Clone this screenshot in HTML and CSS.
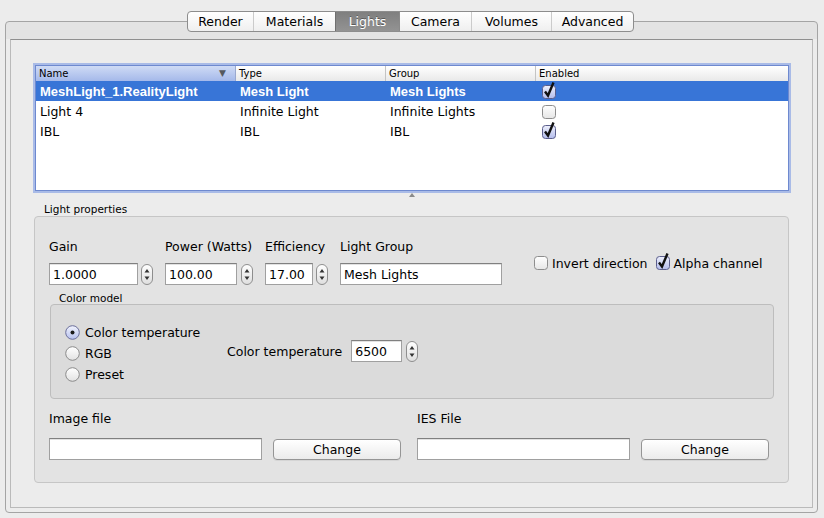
FILE: index.html
```html
<!DOCTYPE html>
<html>
<head>
<meta charset="utf-8">
<title>Lights</title>
<link rel="stylesheet" href="styles.css">
</head>
<body>
<div class="tabs">
  <div class="tab">Render</div>
  <div class="tab">Materials</div>
  <div class="tab sel">Lights</div>
  <div class="tab">Camera</div>
  <div class="tab">Volumes</div>
  <div class="tab">Advanced</div>
</div>
<div class="tabbox">
  <div class="content">
    <div class="table">
      <div class="thead">
        <div class="th sorted"><span>Name</span><span class="sort">▼</span></div>
        <div class="th">Type</div>
        <div class="th">Group</div>
        <div class="th last">Enabled</div>
      </div>
      <div class="row sel">
        <div>MeshLight_1.RealityLight</div>
        <div>Mesh Light</div>
        <div>Mesh Lights</div>
        <div class="cbcell"><svg class="cb" width="14" height="14" viewBox="0 0 14 14"><defs><linearGradient id="gc1" x1="0" y1="0" x2="0" y2="1"><stop offset="0" stop-color="#eef0fc"/><stop offset="1" stop-color="#b3bcec"/></linearGradient></defs><rect x="0.5" y="0.5" width="13" height="13" rx="3" fill="url(#gc1)" stroke="#5b5e8c"/><path d="M3 6.5 L6 10.5 L11.5 -2.5" fill="none" stroke="#111" stroke-width="2.4"/></svg></div>
      </div>
      <div class="row">
        <div>Light 4</div>
        <div>Infinite Light</div>
        <div>Infinite Lights</div>
        <div class="cbcell"><svg class="cb" width="14" height="14" viewBox="0 0 14 14"><defs><linearGradient id="gu1" x1="0" y1="0" x2="0" y2="1"><stop offset="0" stop-color="#ffffff"/><stop offset="1" stop-color="#e6e6e6"/></linearGradient></defs><rect x="0.5" y="0.5" width="13" height="13" rx="3" fill="url(#gu1)" stroke="#8d8d8d"/></svg></div>
      </div>
      <div class="row">
        <div>IBL</div>
        <div>IBL</div>
        <div>IBL</div>
        <div class="cbcell"><svg class="cb" width="14" height="14" viewBox="0 0 14 14"><rect x="0.5" y="0.5" width="13" height="13" rx="3" fill="url(#gc1)" stroke="#5b5e8c"/><path d="M3 6.5 L6 10.5 L11.5 -2.5" fill="none" stroke="#111" stroke-width="2.4"/></svg></div>
      </div>
    </div>
    <div class="splitter"><svg width="6" height="4" viewBox="0 0 6 4"><path d="M0 4 L3 0 L6 4 Z" fill="#8a8a8a"/></svg></div>
    <div class="gtitle">Light properties</div>
    <div class="group">
      <div class="r1">
        <div class="field">
          <div class="lbl">Gain</div>
          <div class="ctl">
            <div class="inp w-gain">1.0000</div>
            <svg class="spin" width="12" height="21" viewBox="0 0 12 21"><defs><linearGradient id="gs" x1="0" y1="0" x2="0" y2="1"><stop offset="0" stop-color="#ffffff"/><stop offset="1" stop-color="#dedede"/></linearGradient></defs><rect x="0.5" y="0.5" width="11" height="20" rx="5.5" fill="url(#gs)" stroke="#8e8e8e"/><path d="M6 5 L3.5 8.5 L8.5 8.5 Z M3.5 12.5 L8.5 12.5 L6 16 Z" fill="#333"/></svg>
          </div>
        </div>
        <div class="field">
          <div class="lbl">Power (Watts)</div>
          <div class="ctl gap4">
            <div class="inp w-power">100.00</div>
            <svg class="spin" width="12" height="21" viewBox="0 0 12 21"><rect x="0.5" y="0.5" width="11" height="20" rx="5.5" fill="url(#gs)" stroke="#8e8e8e"/><path d="M6 5 L3.5 8.5 L8.5 8.5 Z M3.5 12.5 L8.5 12.5 L6 16 Z" fill="#333"/></svg>
          </div>
        </div>
        <div class="field">
          <div class="lbl">Efficiency</div>
          <div class="ctl">
            <div class="inp w-eff">17.00</div>
            <svg class="spin" width="12" height="21" viewBox="0 0 12 21"><rect x="0.5" y="0.5" width="11" height="20" rx="5.5" fill="url(#gs)" stroke="#8e8e8e"/><path d="M6 5 L3.5 8.5 L8.5 8.5 Z M3.5 12.5 L8.5 12.5 L6 16 Z" fill="#333"/></svg>
          </div>
        </div>
        <div class="field">
          <div class="lbl">Light Group</div>
          <div class="ctl">
            <div class="inp w-group">Mesh Lights</div>
          </div>
        </div>
        <div class="checks">
          <div class="chk"><svg class="cb" width="14" height="14" viewBox="0 0 14 14"><rect x="0.5" y="0.5" width="13" height="13" rx="3" fill="url(#gu1)" stroke="#8d8d8d"/></svg><span>Invert direction</span></div>
          <div class="chk"><svg class="cb" width="14" height="14" viewBox="0 0 14 14"><rect x="0.5" y="0.5" width="13" height="13" rx="3" fill="url(#gc1)" stroke="#5b5e8c"/><path d="M3 6.5 L6 10.5 L11.5 -2.5" fill="none" stroke="#111" stroke-width="2.4"/></svg><span>Alpha channel</span></div>
        </div>
      </div>
      <div class="subtitle">Color model</div>
      <div class="inner">
        <div class="radios">
          <div class="radio"><svg width="15" height="15" viewBox="0 0 15 15"><defs><linearGradient id="gr1" x1="0" y1="0" x2="0" y2="1"><stop offset="0" stop-color="#f2f4fd"/><stop offset="1" stop-color="#b6c0ee"/></linearGradient><linearGradient id="gr0" x1="0" y1="0" x2="0" y2="1"><stop offset="0" stop-color="#ffffff"/><stop offset="1" stop-color="#e2e2e2"/></linearGradient></defs><circle cx="7.5" cy="7.5" r="6.8" fill="url(#gr1)" stroke="#6b6f9b"/><circle cx="7.5" cy="7.5" r="2" fill="#1a1a1a"/></svg><span>Color temperature</span></div>
          <div class="radio"><svg width="15" height="15" viewBox="0 0 15 15"><circle cx="7.5" cy="7.5" r="6.8" fill="url(#gr0)" stroke="#8b8b8b"/></svg><span>RGB</span></div>
          <div class="radio"><svg width="15" height="15" viewBox="0 0 15 15"><circle cx="7.5" cy="7.5" r="6.8" fill="url(#gr0)" stroke="#8b8b8b"/></svg><span>Preset</span></div>
        </div>
        <div class="temp">
          <span class="templbl">Color temperature</span>
          <div class="inp w-temp">6500</div>
          <svg class="spin" width="12" height="21" viewBox="0 0 12 21"><rect x="0.5" y="0.5" width="11" height="20" rx="5.5" fill="url(#gs)" stroke="#8e8e8e"/><path d="M6 5 L3.5 8.5 L8.5 8.5 Z M3.5 12.5 L8.5 12.5 L6 16 Z" fill="#333"/></svg>
        </div>
      </div>
      <div class="files">
        <div class="fcol">
          <div class="lbl">Image file</div>
          <div class="fctl">
            <div class="inp w-file"></div>
            <div class="btn">Change</div>
          </div>
        </div>
        <div class="fcol">
          <div class="lbl">IES File</div>
          <div class="fctl">
            <div class="inp w-file"></div>
            <div class="btn">Change</div>
          </div>
        </div>
      </div>
    </div>
  </div>
</div>
</body>
</html>
```
FILE: styles.css
```css
* { box-sizing: border-box; }
html, body { margin: 0; padding: 0; }
body {
  width: 824px;
  height: 518px;
  overflow: hidden;
  background: #ececec;
  font-family: "DejaVu Sans", sans-serif;
  font-size: 12.5px;
  color: #000;
  padding-top: 11px;
}

/* segmented tabs */
.tabs {
  display: flex;
  margin-left: 187px;
  width: 447px;
  height: 21px;
  border: 1px solid #8d8d8d;
  border-radius: 4px;
  background: linear-gradient(#ffffff, #efefef);
  position: relative;
  z-index: 1;
  overflow: hidden;
}
.tab {
  text-align: center;
  line-height: 19px;
  border-left: 1px solid #cbcbcb;
}
.tab:nth-child(1) { width: 65px; border-left: none; }
.tab:nth-child(2) { width: 82px; }
.tab:nth-child(3) { width: 64px; }
.tab:nth-child(4) { width: 72px; }
.tab:nth-child(5) { width: 80px; }
.tab:nth-child(6) { width: 82px; }
.tab.sel {
  background: linear-gradient(#7f7f7f, #939393);
  color: #fff;
  border-left-color: #6f6f6f;
  text-shadow: 0 -1px 0 rgba(0,0,0,0.35);
}
.tab.sel + .tab { border-left-color: #8a8a8a; }

/* tab box */
.tabbox {
  margin: -11px 0 0 5px;
  width: 813px;
  height: 492px;
  border: 1px solid #a4a4a4;
  border-radius: 4px;
  background: linear-gradient(#e3e3e3 0, #e3e3e3 17px, #ececec 17px);
  padding: 17px 4px 4px 4px;
}
.content {
  height: 469px;
  border: 1px solid #bababa;
  border-top-color: #8f8f8f;
  background: #ececec;
  padding-top: 25px;
}

/* table */
.table {
  margin-left: 24px;
  width: 754px;
  height: 126px;
  border: 1px solid #6e89cf;
  box-shadow: 0 0 0 2px #a9bbe7;
  background: #fff;
}
.thead {
  display: grid;
  grid-template-columns: 200px 150px 150px 1fr;
  height: 15px;
  border-bottom: 1px solid #b5b5b5;
}
.th {
  font-size: 10px;
  line-height: 15px;
  padding-left: 3px;
  border-right: 1px solid #c4c4c4;
  background: linear-gradient(#ffffff, #e9e9e9);
}
.th.last { border-right: none; }
.th.sorted {
  display: flex;
  justify-content: space-between;
  padding-right: 9px;
  background: linear-gradient(#cfdbf5, #a5b9ea);
  border-right-color: #9aa9cf;
}
.sort { font-size: 9px; color: #55595f; }
.row {
  display: grid;
  grid-template-columns: 200px 150px 150px 1fr;
  height: 20px;
  line-height: 21px;
}
.row > div { padding-left: 4px; white-space: nowrap; }
.row.sel {
  background: #3875d7;
  color: #fff;
  font-family: "Liberation Sans", sans-serif;
  font-weight: bold;
  font-size: 13px;
}
.row > .cbcell { display: flex; align-items: center; padding-left: 6px; }
.cb { display: block; overflow: visible; }

.splitter { margin: 2px 0 0 398px; height: 4px; line-height: 0; }
.splitter svg { display: block; }

.gtitle {
  margin: 6px 0 0 33px;
  font-size: 10.5px;
  line-height: 13px;
  height: 13px;
}

/* group box */
.group {
  margin-left: 23px;
  width: 755px;
  height: 267px;
  border: 1px solid #c6c6c6;
  border-radius: 4px;
  background: #e3e3e3;
  padding: 22px 0 0 14px;
}
.r1 { display: flex; align-items: flex-start; }
.field { display: flex; flex-direction: column; margin-right: 12px; }
.field:nth-child(4) { margin-right: 0; }
.lbl { line-height: 15px; height: 15px; margin-bottom: 9px; white-space: nowrap; }
.ctl { display: flex; align-items: center; gap: 3px; }
.ctl.gap4 { gap: 4px; }
.spin { display: block; }

.inp {
  height: 22px;
  border: 1px solid #a0a0a0;
  border-top-color: #808080;
  background: #fff;
  padding-left: 3px;
  line-height: 21px;
  box-shadow: inset 0 1px 0 #e2e2e2;
  white-space: nowrap;
}
.w-gain { width: 89px; }
.w-power { width: 72px; }
.w-eff { width: 48px; }
.w-group { width: 162px; }
.w-temp { width: 51px; }
.w-file { width: 213px; }

.checks { display: flex; margin: 17px 0 0 32px; gap: 8px; }
.chk { display: flex; align-items: center; gap: 4px; line-height: 15px; height: 14px; white-space: nowrap; }

.subtitle {
  margin: 6px 0 0 10px;
  padding-top: 1px;
  font-size: 10.5px;
  line-height: 12px;
  height: 13px;
}
.inner {
  margin-left: 1px;
  width: 724px;
  height: 95px;
  border: 1px solid #bdbdbd;
  border-radius: 4px;
  background: #dbdbdb;
  padding: 17px 0 0 14px;
  display: flex;
  align-items: flex-start;
}
.radios { width: 162px; }
.radio { display: flex; align-items: center; gap: 5px; height: 21px; white-space: nowrap; }
.radio svg { display: block; }
.temp { display: flex; align-items: center; margin-top: 18px; height: 22px; }
.templbl { margin-right: 9px; white-space: nowrap; }
.temp .spin { margin-left: 4px; }

.files { display: flex; gap: 16px; margin-top: 12px; }
.fcol { width: 352px; }
.fcol .lbl { margin-bottom: 11px; }
.fctl { display: flex; align-items: center; gap: 11px; }
.btn {
  width: 128px;
  height: 21px;
  margin-top: 2px;
  border: 1px solid #959595;
  border-radius: 4px;
  background: linear-gradient(#ffffff, #ebebeb);
  text-align: center;
  line-height: 19px;
  box-shadow: 0 1px 0 rgba(0,0,0,0.06);
}
```
